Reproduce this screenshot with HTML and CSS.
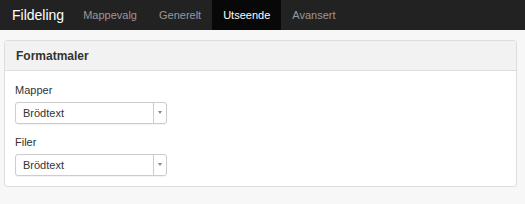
FILE: index.html
```html
<!DOCTYPE html>
<html lang="no">
<head>
    <meta charset="UTF-8">
    <title>Fildeling</title>
    <link rel="stylesheet" href="styles.css">
</head>
<body>
    <div class="navbar">
        <span class="brand">Fildeling</span>
        <a class="nav-item">Mappevalg</a>
        <a class="nav-item">Generelt</a>
        <a class="nav-item active">Utseende</a>
        <a class="nav-item">Avansert</a>
    </div>
    <div class="panel">
        <div class="panel-heading">Formatmaler</div>
        <div class="panel-body">
            <label class="field-label">Mapper</label>
            <div class="select">
                <span class="select-value">Brödtext</span>
                <span class="select-arrow"></span>
            </div>
            <label class="field-label">Filer</label>
            <div class="select">
                <span class="select-value">Brödtext</span>
                <span class="select-arrow"></span>
            </div>
        </div>
    </div>
</body>
</html>
```

FILE: styles.css
```css
* {
    margin: 0;
    padding: 0;
    box-sizing: border-box;
    font-family: "Liberation Sans", Arial, sans-serif;
}
body {
    background: #f7f7f7;
    width: 525px;
    height: 204px;
    overflow: hidden;
}
.navbar {
    display: flex;
    align-items: stretch;
    height: 30px;
    background: #222;
    padding-left: 12px;
}
.brand {
    display: flex;
    align-items: center;
    color: #fff;
    font-size: 14px;
    margin-right: 8px;
}
.nav-item {
    display: flex;
    align-items: center;
    padding: 0 11px;
    color: #999;
    font-size: 11px;
}
.nav-item.active {
    background: #080808;
    color: #fff;
}
.panel {
    margin: 10px 8px 0 4px;
    height: 147px;
    background: #fff;
    border: 1px solid #ddd;
    border-radius: 3px;
}
.panel-heading {
    height: 30px;
    display: flex;
    align-items: center;
    padding-left: 11px;
    background: #f2f2f2;
    border-bottom: 1px solid #ddd;
    border-radius: 3px 3px 0 0;
    font-size: 12px;
    font-weight: bold;
    color: #333;
}
.panel-body {
    padding: 12px 10px 0;
}
.field-label {
    display: block;
    font-size: 11px;
    color: #333;
    line-height: 14px;
    margin-bottom: 5px;
}
.select {
    display: flex;
    width: 152px;
    height: 22px;
    border: 1px solid #ccc;
    border-radius: 3px;
    margin-bottom: 11px;
    box-shadow: 0 1px 1px rgba(0, 0, 0, 0.05);
}
.select-value {
    flex: 1;
    display: flex;
    align-items: center;
    padding-left: 7px;
    font-size: 11px;
    color: #333;
}
.select-arrow {
    width: 13px;
    border-left: 1px solid #ccc;
    position: relative;
}
.select-arrow::after {
    content: "";
    position: absolute;
    left: 4px;
    top: 8px;
    border-left: 2px solid transparent;
    border-right: 2px solid transparent;
    border-top: 3px solid #888;
}
```
